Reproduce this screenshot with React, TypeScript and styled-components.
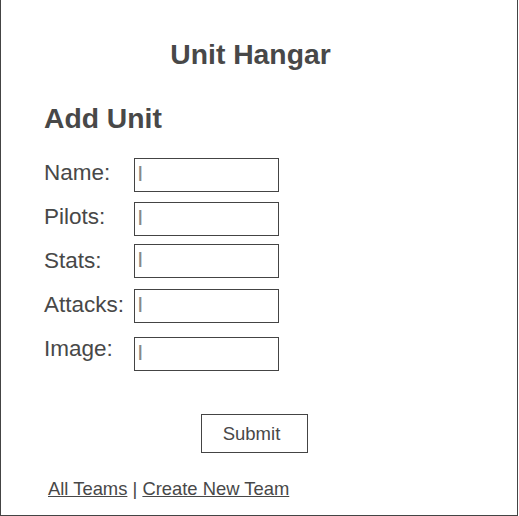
import React from "react";
import styled, { createGlobalStyle } from "styled-components";

const GlobalStyle = createGlobalStyle`
  body {
    margin: 0;
    background: #fff;
    font-family: "Liberation Sans", Arial, sans-serif;
    color: #484848;
  }
`;

const Frame = styled.div`
  box-sizing: border-box;
  width: 518px;
  height: 516px;
  border: 1px solid #444;
  border-top: none;
  padding: 38px 60px 0 43px;
`;

const Title = styled.h1`
  margin: 0;
  font-size: 28.3px;
  font-weight: bold;
  text-align: center;
  line-height: 32px;
`;

const SubTitle = styled.h2`
  margin: 32px 0 0;
  font-size: 28.3px;
  font-weight: bold;
  line-height: 32px;
`;

const Form = styled.form`
  display: flex;
  flex-direction: column;
  margin-top: 24px;
`;

const Row = styled.div<{ $top: number }>`
  display: flex;
  align-items: flex-start;
  margin-top: ${(p) => p.$top}px;
`;

const Label = styled.label<{ $offset: number }>`
  width: 90px;
  margin-top: ${(p) => p.$offset}px;
  font-size: 22.5px;
  line-height: 26px;
`;

const Input = styled.input`
  box-sizing: border-box;
  width: 145px;
  height: 34px;
  margin: 0;
  border: 1px solid #444;
  padding: 0 0 4px 3px;
  font-family: "Liberation Sans", Arial, sans-serif;
  font-size: 16px;
  color: #444;
  outline: none;
  &::placeholder {
    color: #888;
    font-weight: bold;
  }
`;

const ButtonRow = styled.div`
  display: flex;
  justify-content: center;
  padding-left: 7px;
  margin-top: 43px;
`;

const Button = styled.button`
  box-sizing: border-box;
  width: 107px;
  height: 39px;
  padding: 0 5px 0 0;
  background: #fff;
  border: 1px solid #444;
  font-family: "Liberation Sans", Arial, sans-serif;
  font-size: 18.5px;
  color: #484848;
`;

const Links = styled.div`
  margin: 25px 0 0 4px;
  font-size: 18.4px;
  line-height: 22px;
`;

const Link = styled.a`
  color: #484848;
  text-decoration: underline;
`;

const rows = [
  { label: "Name:", top: 0, offset: 2 },
  { label: "Pilots:", top: 10, offset: 2 },
  { label: "Stats:", top: 8, offset: 4 },
  { label: "Attacks:", top: 11, offset: 3 },
  { label: "Image:", top: 14, offset: -1 },
];

export default function App() {
  return (
    <>
      <GlobalStyle />
      <Frame>
        <Title>Unit Hangar</Title>
        <SubTitle>Add Unit</SubTitle>
        <Form onSubmit={(e) => e.preventDefault()}>
          {rows.map((r) => (
            <Row key={r.label} $top={r.top}>
              <Label $offset={r.offset}>{r.label}</Label>
              <Input placeholder="|" />
            </Row>
          ))}
          <ButtonRow>
            <Button type="submit">Submit</Button>
          </ButtonRow>
        </Form>
        <Links>
          <Link href="#">All Teams</Link> | <Link href="#">Create New Team</Link>
        </Links>
      </Frame>
    </>
  );
}
